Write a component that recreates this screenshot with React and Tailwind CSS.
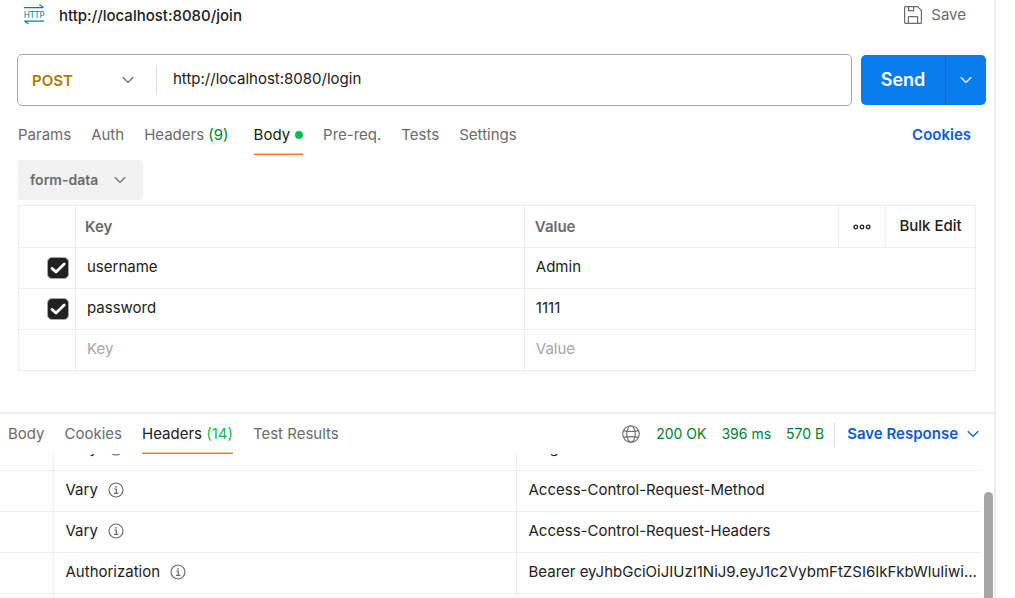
import React, { useState } from "react";

function Chevron({ className = "" }) {
  return (
    <svg
      className={className}
      width="12"
      height="8"
      viewBox="0 0 12 8"
      fill="none"
      stroke="currentColor"
      strokeWidth="1.3"
      aria-hidden="true"
    >
      <path d="M0.8 1.2 L6 6.4 L11.2 1.2" />
    </svg>
  );
}

function HttpIcon() {
  return (
    <svg width="22" height="22" viewBox="0 0 22 22" fill="none" aria-hidden="true">
      <g stroke="#0a7f97" strokeWidth="1.2">
        <path d="M1 3.6 H20.6 M16.4 0.8 L20.4 3.6" />
        <path d="M21 17.2 H1.4 M5.6 20 L1.6 17.2" />
      </g>
      <text
        x="11"
        y="14"
        textAnchor="middle"
        fontSize="9"
        fill="#0a7f97"
        fontFamily="'DejaVu Sans Condensed', sans-serif"
      >
        HTTP
      </text>
    </svg>
  );
}

function SaveIcon() {
  return (
    <svg width="18" height="18" viewBox="0 0 18 18" fill="none" stroke="#6b6b6b" strokeWidth="1.2" aria-hidden="true">
      <path d="M1.6 0.6 H13.6 L17.4 4.6 V16.4 a1 1 0 0 1 -1 1 H1.6 a1 1 0 0 1 -1 -1 V1.6 a1 1 0 0 1 1 -1 Z" />
      <path d="M4.6 0.8 V4.6 H9.6 V0.8" />
      <path d="M4.4 17.2 V11.4 a0.8 0.8 0 0 1 0.8 -0.8 H12.8 a0.8 0.8 0 0 1 0.8 0.8 V17.2" />
    </svg>
  );
}

function GlobeIcon() {
  return (
    <svg width="18" height="18" viewBox="0 0 18 18" fill="none" stroke="#6b6b6b" strokeWidth="1.1" aria-hidden="true">
      <circle cx="9" cy="9" r="8.3" />
      <ellipse cx="9" cy="9" rx="4.2" ry="8.3" />
      <path d="M1.6 5.6 Q9 7.4 16.4 5.6 M1.6 12.4 Q9 10.8 16.4 12.4" />
    </svg>
  );
}

function InfoIcon() {
  return (
    <svg width="16" height="16" viewBox="0 0 16 16" fill="none" stroke="#6b6b6b" strokeWidth="1.2" aria-hidden="true">
      <circle cx="8" cy="8" r="7" />
      <path d="M6.2 7 H8.3 V11.2 M6 11.3 H10.4" />
      <circle cx="8" cy="4.8" r="0.9" fill="#6b6b6b" stroke="none" />
    </svg>
  );
}

function MoreIcon() {
  return (
    <svg width="18" height="6" viewBox="0 0 18 6" fill="none" stroke="#212121" strokeWidth="1.3" aria-hidden="true">
      <circle cx="2.8" cy="3" r="1.8" />
      <circle cx="9" cy="3" r="1.8" />
      <circle cx="15.2" cy="3" r="1.8" />
    </svg>
  );
}

function Tab({ children, active }) {
  return (
    <button
      type="button"
      className={
        active
          ? "flex h-full items-center border-b border-[#ff6c37] pt-px text-[#212121] shadow-[inset_0_-1px_0_#ffc4ae]"
          : "flex h-full items-center border-b border-transparent pt-px text-[#6b6b6b]"
      }
    >
      {children}
    </button>
  );
}

function ParamRow({ id, name, value, checked }) {
  const [on, setOn] = useState(checked);
  const filled = name !== "";
  return (
    <tr className="h-[41px]">
      <td className="border border-[#ededed] p-0">
        {filled && (
          <span className="grid justify-end pr-[6px]">
            <input
              type="checkbox"
              aria-label={"Include " + name}
              checked={on}
              onChange={() => setOn(!on)}
              className="col-start-1 row-start-1 size-[22px] appearance-none rounded-[5px] border border-[#a6a6a6] checked:bg-[#212121]"
            />
            {on && (
              <svg
                className="pointer-events-none col-start-1 row-start-1 size-[22px]"
                viewBox="0 0 22 22"
                fill="none"
                stroke="#fff"
                strokeWidth="2.8"
                strokeLinecap="round"
                strokeLinejoin="round"
                aria-hidden="true"
              >
                <path d="M5 11.4 L9 15 L17.2 7" />
              </svg>
            )}
          </span>
        )}
      </td>
      <td className="border border-[#ededed] p-0">
        <input
          id={id + "-key"}
          aria-label="Key"
          placeholder="Key"
          defaultValue={name}
          className="block w-full bg-transparent px-[11px] pb-[2px] outline-none placeholder:text-[#a6a6a6]"
        />
      </td>
      <td colSpan={3} className="border border-[#ededed] p-0">
        <input
          id={id + "-value"}
          aria-label="Value"
          placeholder="Value"
          defaultValue={value}
          className="block w-full bg-transparent px-[11px] pb-[2px] outline-none placeholder:text-[#a6a6a6]"
        />
      </td>
    </tr>
  );
}

const responseHeaders = [
  { name: "Vary", value: "Origin" },
  { name: "Vary", value: "Access-Control-Request-Method" },
  { name: "Vary", value: "Access-Control-Request-Headers" },
  {
    name: "Authorization",
    value: "Bearer eyJhbGciOiJIUzI1NiJ9.eyJ1c2VybmFtZSI6IkFkbWluIiwicm9sZSI6",
  },
];

export default function App() {
  return (
    <div className="flex h-screen overflow-hidden bg-white font-['Inter',sans-serif] text-[15px] leading-5 text-[#212121]">
      <main className="flex min-w-0 flex-1 flex-col border-r-2 border-[#ededed]">
        <header className="flex h-[30px] shrink-0 items-center justify-between pl-[23px] pr-7">
          <h1 className="flex items-center gap-[14px] font-medium">
            <HttpIcon />
            <span className="pt-[2px]">http://localhost:8080/join</span>
          </h1>
          <button type="button" className="flex items-center gap-[9px] text-[#6b6b6b]">
            <SaveIcon />
            Save
          </button>
        </header>

        <form
          className="mt-6 flex shrink-0 items-center gap-[9px] pl-[17px] pr-2"
          onSubmit={(e) => e.preventDefault()}
        >
          <div className="flex h-[52px] min-w-0 flex-1 items-center rounded-[5px] border border-[#a6a6a6]">
            <div className="grid w-[139px] shrink-0 items-center border-r border-[#e0e0e0]">
              <select
                aria-label="Request method"
                defaultValue="POST"
                className="col-start-1 row-start-1 h-[30px] w-full appearance-none bg-transparent pl-[14px] pt-[2px] font-semibold text-[#ad7a03] outline-none"
              >
                <option>GET</option>
                <option>POST</option>
                <option>PUT</option>
                <option>DELETE</option>
              </select>
              <Chevron className="pointer-events-none col-start-1 row-start-1 mr-[22px] justify-self-end text-[#6b6b6b]" />
            </div>
            <input
              aria-label="Request URL"
              defaultValue="http://localhost:8080/login"
              className="min-w-0 flex-1 bg-transparent px-4 pb-[2px] outline-none"
            />
          </div>
          <div className="flex h-[50px] overflow-hidden rounded-[5px] bg-[#097bed] text-white">
            <button type="submit" className="w-[84px] text-lg font-semibold">
              Send
            </button>
            <button
              type="button"
              aria-label="Send options"
              className="flex w-[41px] items-center justify-center border-l border-[#0a6bd0]"
            >
              <Chevron />
            </button>
          </div>
        </form>

        <nav className="mt-2 flex h-[41px] shrink-0 items-center gap-5 pl-[18px] pr-[23px]">
          <Tab>Params</Tab>
          <Tab>Auth</Tab>
          <Tab>
            Headers&nbsp;<span className="pr-[5px] text-[#007f31]">(9)</span>
          </Tab>
          <Tab active>
            Body
            <span className="ml-[5px] size-2 rounded-full bg-[#0cbb52]" />
          </Tab>
          <Tab>Pre-req.</Tab>
          <Tab>Tests</Tab>
          <Tab>Settings</Tab>
          <a href="#cookies" className="ml-auto font-semibold text-[#0b5cd1]">
            Cookies
          </a>
        </nav>

        <div className="mt-[5px] grid w-[125px] shrink-0 items-center self-start rounded bg-[#f2f2f2] ml-[18px]">
          <select
            aria-label="Body type"
            defaultValue="form-data"
            className="col-start-1 row-start-1 h-10 w-full appearance-none bg-transparent pl-3 text-sm font-semibold text-[#6b6b6b] outline-none"
          >
            <option>none</option>
            <option>form-data</option>
            <option>raw</option>
          </select>
          <Chevron className="pointer-events-none col-start-1 row-start-1 mr-[17px] justify-self-end text-[#6b6b6b]" />
        </div>

        <div className="mt-[5px] shrink-0 pl-[18px] pr-[18px]">
          <table className="w-full table-fixed border-collapse text-left">
            <colgroup>
              <col className="w-[57px]" />
              <col className="w-[46.9%]" />
              <col />
              <col className="w-[47px]" />
              <col className="w-[90px]" />
            </colgroup>
            <thead>
              <tr className="h-[42px]">
                <th className="border border-[#ededed] p-0" aria-label="Enabled" />
                <th className="border border-[#ededed] px-[9px] py-0 font-semibold text-[#6b6b6b]">Key</th>
                <th className="border border-[#ededed] px-[10px] py-0 font-semibold text-[#6b6b6b]">Value</th>
                <th className="border border-[#ededed] p-0">
                  <button type="button" aria-label="More columns" className="flex w-full justify-center">
                    <MoreIcon />
                  </button>
                </th>
                <th className="border border-[#ededed] p-0 pb-[2px] text-center">
                  <button type="button" className="font-medium">
                    Bulk Edit
                  </button>
                </th>
              </tr>
            </thead>
            <tbody>
              <ParamRow id="row1" name="username" value="Admin" checked />
              <ParamRow id="row2" name="password" value="1111" checked />
              <ParamRow id="row3" name="" value="" checked={false} />
            </tbody>
          </table>
        </div>

        <section className="mt-[41px] flex min-h-0 flex-1 flex-col border-t-2 border-[#ededed]">
          <div className="flex h-10 shrink-0 items-center justify-between pl-2 pr-[15px]">
            <nav className="flex h-full items-center gap-5">
              <Tab>Body</Tab>
              <Tab>Cookies</Tab>
              <Tab active>
                Headers&nbsp;<span className="text-[#0cbb52]">(14)</span>
              </Tab>
              <Tab>Test Results</Tab>
            </nav>
            <div className="flex items-center text-sm text-[#007f31]">
              <GlobeIcon />
              <span className="ml-4 pb-px">200 OK</span>
              <span className="ml-[15px] pb-px">396 ms</span>
              <span className="ml-[15px] pb-px">570 B</span>
              <button
                type="button"
                className="ml-[10px] flex h-[25px] items-center gap-[9px] border-l border-[#e0e0e0] pl-3 text-[15px] font-semibold text-[#0b5cd1]"
              >
                Save Response
                <Chevron />
              </button>
            </div>
          </div>

          <div className="flex min-h-0 flex-1 justify-between overflow-hidden">
            <div className="min-w-0 flex-1 overflow-hidden pr-[3px]">
              <table className="-mt-[25px] w-full table-fixed border-collapse text-left">
                <colgroup>
                  <col className="w-[53px]" />
                  <col className="w-[463px]" />
                  <col />
                </colgroup>
                <tbody>
                  {responseHeaders.map((h, i) => (
                    <tr key={i} className="h-[41px] border-b border-[#ededed]">
                      <td className="border-r border-[#ededed] p-0" />
                      <td className="border-r border-[#ededed] pb-[2px] pl-3 pr-2 pt-0">
                        <span className="flex items-center gap-[10px]">
                          {h.name}
                          <InfoIcon />
                        </span>
                      </td>
                      <td className="truncate pb-[2px] pl-3 pr-1 pt-0">{h.value}</td>
                    </tr>
                  ))}
                  <tr className="h-[41px]">
                    <td className="border-r border-[#ededed] p-0" />
                    <td className="border-r border-[#ededed] p-0" />
                    <td className="p-0" />
                  </tr>
                </tbody>
              </table>
            </div>
            <div className="w-[10px] shrink-0 pr-px pt-[38px]">
              <div className="h-full rounded-t-full bg-[#a6a6a6]" />
            </div>
          </div>
        </section>
      </main>
      <aside className="w-[19px] shrink-0" />
    </div>
  );
}
